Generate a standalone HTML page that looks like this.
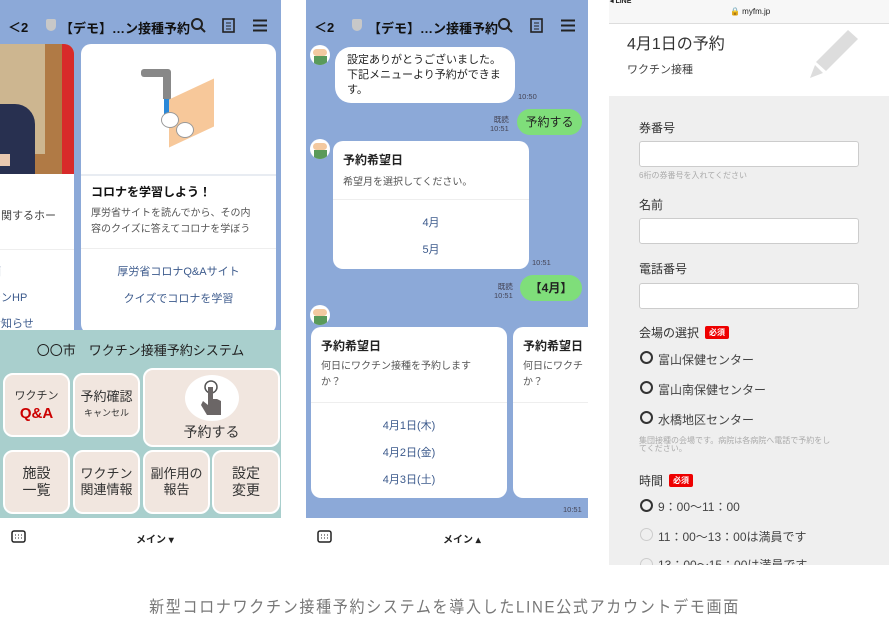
<!DOCTYPE html>
<html><head><meta charset="utf-8">
<style>
*{margin:0;padding:0;box-sizing:border-box}
body{width:889px;height:635px;background:#fff;position:relative;overflow:hidden;font-family:"Liberation Sans","Noto Sans CJK JP",sans-serif;color:#222}
.a{position:absolute}
.blue{background:#8ca9d8}
.hdr{font-size:13px;font-weight:bold;color:#111;white-space:nowrap}
.card{background:#fff;border-radius:10px;position:absolute;overflow:hidden}
.lnk{color:#3c5a8c;font-size:11px;text-align:center;position:absolute;left:0;right:0}
.btn{position:absolute;background:#f1e6df;border:2px solid #fff;border-radius:10px;text-align:center;color:#333;font-size:13px;line-height:16px;display:flex;flex-direction:column;justify-content:center;align-items:center}
.bub{position:absolute;background:#fff;border-radius:16px;font-size:11px;line-height:15px;color:#222}
.grn{position:absolute;background:#7fde7a;border-radius:16px;font-size:12px;text-align:center}
.tm{position:absolute;font-size:7.5px;color:#445;text-align:right;line-height:9px}
.av{position:absolute;width:20px;height:20px;border-radius:50%;background:#fff;overflow:hidden}
.lbl{position:absolute;font-size:12px;color:#333;left:639px}
.inp{position:absolute;left:639px;width:220px;height:26px;background:#fff;border:1px solid #ccc;border-radius:3px}
.rad{position:absolute;left:640px;width:13px;height:13px;border:2px solid #333;border-radius:50%}
.rt{position:absolute;left:658px;font-size:12px;color:#444}
.req{display:inline-block;background:#e00;color:#fff;font-size:8px;font-weight:bold;padding:1px 4px;border-radius:2px;margin-left:6px;vertical-align:2px}
</style></head><body>

<!-- Screen 1 -->
<div class="a blue" style="left:0;top:0;width:281px;height:518px"></div>
<div class="a hdr" style="left:8px;top:17px">＜2</div>
<div class="a" style="left:46px;top:19px;width:10px;height:12px;background:#c8c8c8;border-radius:2px 2px 5px 5px"></div>
<div class="a hdr" style="left:60px;top:18px">【デモ】…ン接種予約</div>
<svg class="a" style="left:190px;top:17px" width="16" height="16"><circle cx="7" cy="7" r="5" fill="none" stroke="#222" stroke-width="2"/><line x1="11" y1="11" x2="15" y2="15" stroke="#222" stroke-width="2"/></svg>
<svg class="a" style="left:222px;top:18px" width="14" height="15"><rect x="1" y="1" width="11" height="13" fill="none" stroke="#222" stroke-width="1.6"/><line x1="4" y1="5" x2="9" y2="5" stroke="#222"/><line x1="4" y1="8" x2="9" y2="8" stroke="#222"/><line x1="4" y1="11" x2="9" y2="11" stroke="#222"/></svg>
<svg class="a" style="left:253px;top:19px" width="14" height="13"><path d="M0 1.5H14M0 6.5H14M0 11.5H14" stroke="#222" stroke-width="2"/></svg>

<div class="card" style="left:-10px;top:44px;width:84px;height:290px;border-radius:0 10px 0 0">
 <div class="a" style="left:0;top:0;width:84px;height:130px;background:#b07a45"></div>
 <div class="a" style="left:10px;top:0;width:45px;height:110px;background:#cdb690"></div>
 <div class="a" style="left:72px;top:0;width:12px;height:130px;background:#d82a2a"></div>
 <div class="a" style="left:0;top:60px;width:45px;height:70px;background:#283050;border-radius:0 20px 0 0"></div>
 <div class="a" style="left:0;top:110px;width:20px;height:12px;background:#e8c8b0"></div>
 <div class="a" style="left:0;top:163px;font-size:11px;color:#444;white-space:nowrap">に関するホー</div>
 <div class="a" style="left:0;top:205px;width:84px;height:1px;background:#eee"></div>
 <div class="a" style="left:0;top:219px;font-size:11px;color:#3c5a8c">画</div>
 <div class="a" style="left:0;top:245px;font-size:11px;color:#3c5a8c">チンHP</div>
 <div class="a" style="left:0;top:271px;font-size:11px;color:#3c5a8c">お知らせ</div>
</div>
<div class="card" style="left:81px;top:44px;width:195px;height:290px">
 <div class="a" style="left:60px;top:25px;width:30px;height:8px;background:#888;border-radius:3px"></div>
 <div class="a" style="left:82px;top:30px;width:8px;height:25px;background:#888"></div>
 <div class="a" style="left:83px;top:55px;width:7px;height:18px;background:#2a88d8"></div>
 <div class="a" style="left:88px;top:45px;width:45px;height:48px;background:#f7c89a;transform:skewY(-25deg)"></div>
 <div class="a" style="left:80px;top:68px;width:18px;height:16px;background:#fff;border:1px solid #999;border-radius:50%"></div>
 <div class="a" style="left:95px;top:78px;width:18px;height:16px;background:#fff;border:1px solid #999;border-radius:50%"></div>
 <div class="a" style="left:0;top:130px;width:195px;height:2px;background:#e8ecf2"></div>
 <div class="a" style="left:10px;top:139px;font-size:12px;font-weight:bold;color:#111">コロナを学習しよう！</div>
 <div class="a" style="left:10px;top:162px;font-size:10px;line-height:16px;color:#555">厚労省サイトを読んでから、その内<br>容のクイズに答えてコロナを学ぼう</div>
 <div class="a" style="left:0;top:204px;width:195px;height:1px;background:#eee"></div>
 <div class="lnk" style="top:219px">厚労省コロナQ&amp;Aサイト</div>
 <div class="lnk" style="top:246px">クイズでコロナを学習</div>
</div>

<div class="a" style="left:0;top:330px;width:281px;height:188px;background:#a9cfcd"></div>
<div class="a" style="left:0;top:340px;width:281px;text-align:center;font-size:13px;color:#222">〇〇市　ワクチン接種予約システム</div>
<div class="btn" style="left:3px;top:373px;width:67px;height:64px;font-size:11px">ワクチン<span style="color:#c00;font-size:15px;font-weight:bold;line-height:19px">Q&amp;A</span></div>
<div class="btn" style="left:73px;top:373px;width:67px;height:64px">予約確認<span style="font-size:9px">キャンセル</span></div>
<div class="btn" style="left:143px;top:368px;width:137px;height:79px;justify-content:flex-start">
 <div style="width:54px;height:46px;border-radius:50%;background:#fff;margin-top:5px;position:relative">
 <svg width="54" height="46"><circle cx="26" cy="12" r="6" fill="none" stroke="#555" stroke-width="1.5"/><path d="M23 12V30L18 26L16 30L22 40H36V26L32 24L28 24V12Z" fill="#6b6666"/></svg></div>
 <span style="font-size:14px;margin-top:3px">予約する</span></div>
<div class="btn" style="left:3px;top:450px;width:67px;height:64px;font-size:14px;line-height:17px">施設<br>一覧</div>
<div class="btn" style="left:73px;top:450px;width:67px;height:64px">ワクチン<br>関連情報</div>
<div class="btn" style="left:143px;top:450px;width:67px;height:64px">副作用の<br>報告</div>
<div class="btn" style="left:212px;top:450px;width:68px;height:64px;font-size:14px;line-height:17px">設定<br>変更</div>
<svg class="a" style="left:11px;top:530px" width="15" height="13"><rect x="1" y="1" width="13" height="11" rx="2" fill="none" stroke="#222" stroke-width="1.5"/><path d="M4 5h1M7 5h1M10 5h1M4 8h1M7 8h1M10 8h1" stroke="#222"/></svg>
<div class="a" style="left:136px;top:531px;font-size:10px;font-weight:bold">メイン ▾</div>

<!-- Screen 2 -->
<div class="a blue" style="left:306px;top:0;width:282px;height:518px"></div>
<div class="a hdr" style="left:314px;top:17px">＜2</div>
<div class="a" style="left:352px;top:19px;width:10px;height:12px;background:#c8c8c8;border-radius:2px 2px 5px 5px"></div>
<div class="a hdr" style="left:368px;top:18px">【デモ】…ン接種予約</div>
<svg class="a" style="left:497px;top:17px" width="16" height="16"><circle cx="7" cy="7" r="5" fill="none" stroke="#222" stroke-width="2"/><line x1="11" y1="11" x2="15" y2="15" stroke="#222" stroke-width="2"/></svg>
<svg class="a" style="left:530px;top:18px" width="14" height="15"><rect x="1" y="1" width="11" height="13" fill="none" stroke="#222" stroke-width="1.6"/><line x1="4" y1="5" x2="9" y2="5" stroke="#222"/><line x1="4" y1="8" x2="9" y2="8" stroke="#222"/><line x1="4" y1="11" x2="9" y2="11" stroke="#222"/></svg>
<svg class="a" style="left:561px;top:19px" width="14" height="13"><path d="M0 1.5H14M0 6.5H14M0 11.5H14" stroke="#222" stroke-width="2"/></svg>

<div class="av" style="left:310px;top:45px"><div class="a" style="left:3px;top:4px;width:14px;height:7px;background:#f3c9a0;border-radius:4px"></div><div class="a" style="left:4px;top:11px;width:13px;height:9px;background:#5a9a5a"></div></div>
<div class="bub" style="left:335px;top:47px;width:180px;height:56px;padding:6px 12px">設定ありがとうございました。<br>下記メニューより予約ができま<br>す。</div>
<div class="tm" style="left:518px;top:92px">10:50</div>
<div class="tm" style="left:490px;top:115px">既読<br>10:51</div>
<div class="grn" style="left:517px;top:109px;width:65px;height:26px;line-height:26px">予約する</div>

<div class="av" style="left:310px;top:139px"><div class="a" style="left:3px;top:4px;width:14px;height:7px;background:#f3c9a0;border-radius:4px"></div><div class="a" style="left:4px;top:11px;width:13px;height:9px;background:#5a9a5a"></div></div>
<div class="card" style="left:333px;top:141px;width:196px;height:128px">
 <div class="a" style="left:10px;top:10px;font-size:12px;font-weight:bold">予約希望日</div>
 <div class="a" style="left:10px;top:32px;font-size:10px;color:#555">希望月を選択してください。</div>
 <div class="a" style="left:0;top:58px;width:196px;height:1px;background:#eee"></div>
 <div class="lnk" style="top:73px">4月</div>
 <div class="lnk" style="top:100px">5月</div>
</div>
<div class="tm" style="left:532px;top:258px">10:51</div>
<div class="tm" style="left:494px;top:282px">既読<br>10:51</div>
<div class="grn" style="left:520px;top:275px;width:62px;height:26px;line-height:26px;font-weight:bold">【4月】</div>

<div class="av" style="left:310px;top:305px"><div class="a" style="left:3px;top:4px;width:14px;height:7px;background:#f3c9a0;border-radius:4px"></div><div class="a" style="left:4px;top:11px;width:13px;height:9px;background:#5a9a5a"></div></div>
<div class="card" style="left:311px;top:327px;width:196px;height:171px">
 <div class="a" style="left:10px;top:10px;font-size:12px;font-weight:bold">予約希望日</div>
 <div class="a" style="left:10px;top:32px;font-size:10px;line-height:16px;color:#555">何日にワクチン接種を予約します<br>か？</div>
 <div class="a" style="left:0;top:75px;width:196px;height:1px;background:#eee"></div>
 <div class="lnk" style="top:90px">4月1日(木)</div>
 <div class="lnk" style="top:117px">4月2日(金)</div>
 <div class="lnk" style="top:144px">4月3日(土)</div>
</div>
<div class="card" style="left:513px;top:327px;width:75px;height:171px;border-radius:10px 0 0 10px">
 <div class="a" style="left:10px;top:10px;font-size:12px;font-weight:bold;white-space:nowrap">予約希望日</div>
 <div class="a" style="left:10px;top:32px;font-size:10px;line-height:16px;color:#555;white-space:nowrap">何日にワクチ<br>か？</div>
 <div class="a" style="left:0;top:75px;width:75px;height:1px;background:#eee"></div>
</div>
<div class="tm" style="left:563px;top:505px">10:51</div>
<svg class="a" style="left:317px;top:530px" width="15" height="13"><rect x="1" y="1" width="13" height="11" rx="2" fill="none" stroke="#222" stroke-width="1.5"/><path d="M4 5h1M7 5h1M10 5h1M4 8h1M7 8h1M10 8h1" stroke="#222"/></svg>
<div class="a" style="left:443px;top:531px;font-size:10px;font-weight:bold">メイン ▴</div>

<!-- Screen 3 -->
<div class="a" style="left:609px;top:0;width:280px;height:24px;background:#f7f7f7;border-bottom:1px solid #ddd"></div>
<div class="a" style="left:610px;top:-3px;font-size:7px;font-weight:bold">◂ LINE</div>
<div class="a" style="left:730px;top:7px;font-size:8px">🔒 myfm.jp</div>
<div class="a" style="left:627px;top:30px;font-size:16px;color:#333">4月1日の予約</div>
<div class="a" style="left:627px;top:61px;font-size:11px;color:#444">ワクチン接種</div>
<svg class="a" style="left:808px;top:28px" width="52" height="52"><path d="M40 2L50 11L18 43L8 34Z" fill="#ddd"/><path d="M7 37L15 45L2 50Z" fill="#ddd"/></svg>
<div class="a" style="left:609px;top:96px;width:280px;height:469px;background:#efefef"></div>
<div class="lbl" style="top:119px">券番号</div>
<div class="inp" style="top:141px"></div>
<div class="a" style="left:639px;top:170px;font-size:8px;color:#aaa">6桁の券番号を入れてください</div>
<div class="lbl" style="top:196px">名前</div>
<div class="inp" style="top:218px"></div>
<div class="lbl" style="top:260px">電話番号</div>
<div class="inp" style="top:283px"></div>
<div class="lbl" style="top:324px">会場の選択<span class="req">必須</span></div>
<div class="rad" style="top:351px"></div><div class="rt" style="top:351px">富山保健センター</div>
<div class="rad" style="top:381px"></div><div class="rt" style="top:381px">富山南保健センター</div>
<div class="rad" style="top:411px"></div><div class="rt" style="top:411px">水橋地区センター</div>
<div class="a" style="left:639px;top:437px;font-size:8px;line-height:8px;color:#aaa">集団接種の会場です。病院は各病院へ電話で予約をし<br>てください。</div>
<div class="lbl" style="top:472px">時間<span class="req">必須</span></div>
<div class="rad" style="top:499px"></div><div class="rt" style="top:498px">9：00〜11：00</div>
<div class="rad" style="top:528px;border:1px solid #ccc"></div><div class="rt" style="top:528px">11：00〜13：00は満員です</div>
<div class="a" style="left:609px;top:555px;width:280px;height:10px;overflow:hidden"><div class="rad" style="left:31px;top:3px;border:1px solid #ccc"></div><div class="rt" style="left:49px;top:1px">13：00〜15：00は満員です</div></div>

<div class="a" style="left:0;top:596px;width:889px;text-align:center;font-size:15px;color:#777;letter-spacing:1.7px;transform:scaleY(1.1)">新型コロナワクチン接種予約システムを導入したLINE公式アカウントデモ画面</div>
</body></html>
